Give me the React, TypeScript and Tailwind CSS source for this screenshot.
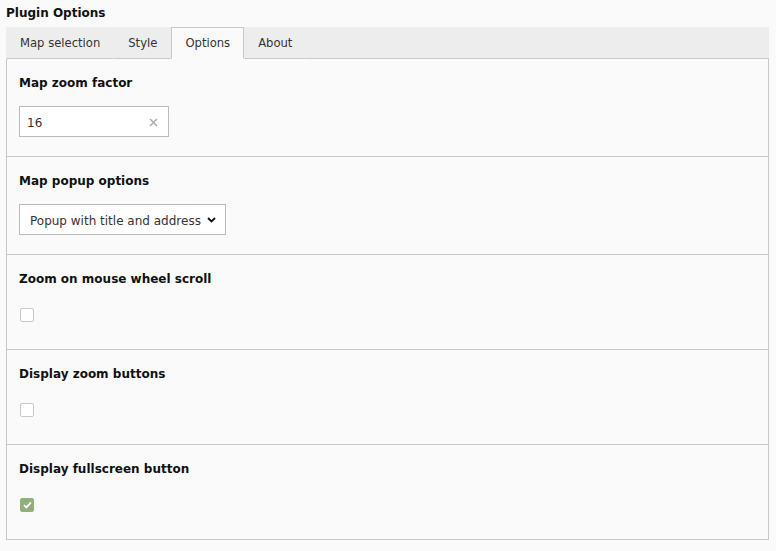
import { useState } from "react";

// Plugin-opties formulier met tabbladen (kaartplugin).
const tabs = ["Map selection", "Style", "Options", "About"];

function Checkbox({ checked, onChange }: { checked: boolean; onChange: () => void }) {
  return (
    <button
      type="button"
      onClick={onChange}
      className={`flex h-[14px] w-[14px] items-center justify-center rounded-[2px] border ${
        checked ? "border-[#8fb179] bg-[#8fb179]" : "border-[#c8c8c8] bg-white"
      }`}
    >
      {checked && (
        <svg width="9" height="8" viewBox="0 0 9 8">
          <path d="M1 4.2 L3.4 6.4 L8 1.4" fill="none" stroke="white" strokeWidth="1.8" />
        </svg>
      )}
    </button>
  );
}

function Sectie({ label, children, last }: { label: string; children: React.ReactNode; last?: boolean }) {
  return (
    <div className={`px-[12px] pt-[15px] ${last ? "" : "border-b border-[#c8c8c8]"}`}>
      <div className="text-[12px] font-bold leading-[18px] text-[#111]">{label}</div>
      {children}
    </div>
  );
}

export default function App() {
  const [actief, setActief] = useState("Options");
  const [zoom, setZoom] = useState("16");
  const [wiel, setWiel] = useState(false);
  const [knoppen, setKnoppen] = useState(false);
  const [fullscreen, setFullscreen] = useState(true);

  return (
    <div
      className="min-h-[551px] bg-[#fafafa] pl-[6px] pr-[7px] pt-[4px] text-[11.6px] text-[#333]"
      style={{ fontFamily: '"DejaVu Sans", Verdana, sans-serif' }}
    >
      <div className="text-[12px] font-bold leading-[18px] text-[#111]">Plugin Options</div>

      <div className="mt-[5px] flex h-[32px] bg-[#ededed]">
        {tabs.map((tab) => (
          <button
            key={tab}
            type="button"
            onClick={() => setActief(tab)}
            className={`relative h-[32px] border px-[13px] leading-[30px] ${
              actief === tab
                ? "z-10 border-[#c8c8c8] border-b-[#fafafa] bg-[#fafafa]"
                : "border-transparent border-b-[#c8c8c8]"
            }`}
          >
            {tab}
          </button>
        ))}
        <div className="flex-1 border-b border-[#c8c8c8]" />
      </div>

      <div className="border border-t-0 border-[#c8c8c8] bg-[#fafafa]">
        <Sectie label="Map zoom factor">
          <div className="mb-[19px] mt-[14px] flex h-[31px] w-[150px] items-center border border-[#bbb] bg-white pl-[7px] pr-[10px] pt-[2px]">
            <input
              value={zoom}
              onChange={(e) => setZoom(e.target.value)}
              className="min-w-0 flex-1 bg-transparent text-[12px] text-[#333] outline-none"
            />
            <button type="button" onClick={() => setZoom("")}>
              <svg width="9" height="9" viewBox="0 0 9 9">
                <path d="M1 1 L8 8 M8 1 L1 8" stroke="#b0b0b0" strokeWidth="1.6" />
              </svg>
            </button>
          </div>
        </Sectie>

        <Sectie label="Map popup options">
          <div className="mb-[19px] mt-[14px] flex h-[31px] w-[207px] items-center justify-between border border-[#bbb] bg-white pl-[10px] pr-[9px]">
            <span className="pt-[2px] text-[12px]">Popup with title and address</span>
            <svg width="9" height="6" viewBox="0 0 9 6">
              <path d="M1 1 L4.5 4.5 L8 1" fill="none" stroke="#111" strokeWidth="1.8" />
            </svg>
          </div>
        </Sectie>

        <Sectie label="Zoom on mouse wheel scroll">
          <div className="mb-[27px] mt-[20px] flex pl-[1px]">
            <Checkbox checked={wiel} onChange={() => setWiel(!wiel)} />
          </div>
        </Sectie>

        <Sectie label="Display zoom buttons">
          <div className="mb-[27px] mt-[20px] flex pl-[1px]">
            <Checkbox checked={knoppen} onChange={() => setKnoppen(!knoppen)} />
          </div>
        </Sectie>

        <Sectie label="Display fullscreen button" last>
          <div className="mb-[27px] mt-[20px] flex pl-[1px]">
            <Checkbox checked={fullscreen} onChange={() => setFullscreen(!fullscreen)} />
          </div>
        </Sectie>
      </div>
    </div>
  );
}
